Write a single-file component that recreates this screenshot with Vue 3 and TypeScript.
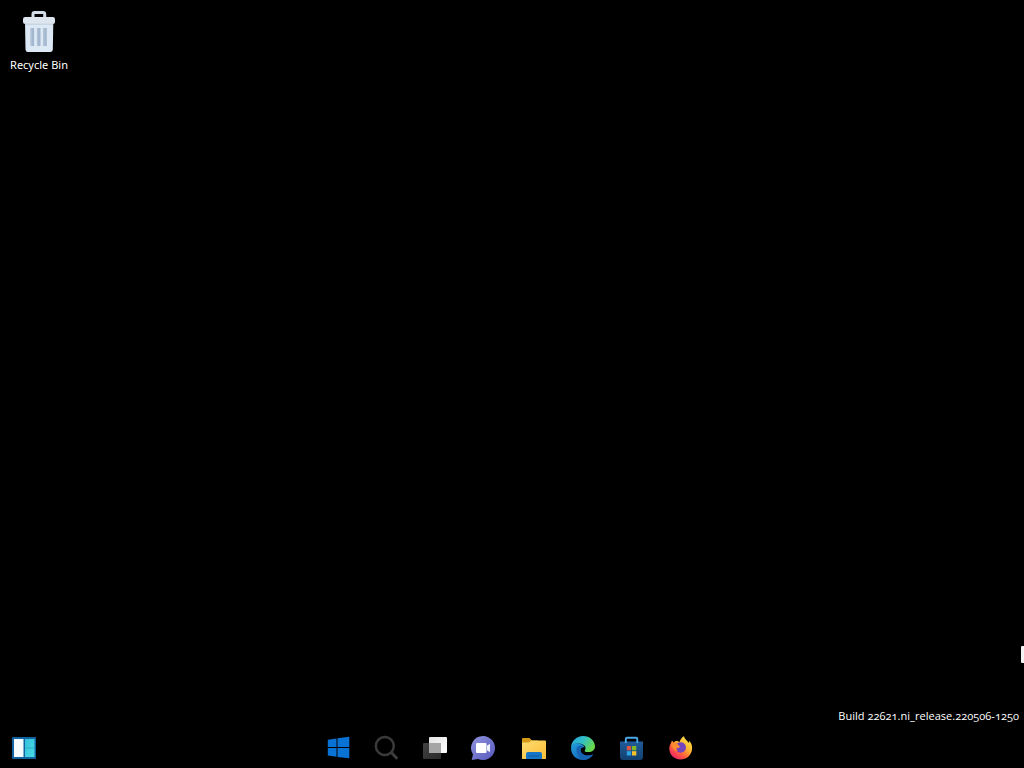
<script setup lang="ts">
import { ref } from 'vue'

const label = ref('Recycle Bin')
const build = ref('Build 22621.ni_release.220506-1250')
</script>

<template>
  <div class="screen">
    <main class="desktop">
      <div class="shortcut">
        <svg class="bin" width="40" height="46" viewBox="19 8 40 46">
          <path d="M33 17V14Q33 12.400 34.700 12.400H43Q44.700 12.400 44.700 14V17" fill="none" stroke="#d3dde7" stroke-width="3" />
          <path d="M25 22H53.300L52.800 49.500Q52.600 52 50.200 52H28Q25.600 52 25.500 49.500Z" fill="#dce8f4" />
          <rect x="23" y="17" width="32" height="7" rx="2.200" fill="#dde6ef" />
          <path d="M25 24.200H53" stroke="#bccbdc" stroke-width="0.900" />
          <path d="M32.300 28V46M38.700 28V46M45 28V46" stroke="#a3b7cf" stroke-width="3.600" />
          <path d="M31.300 28V46M37.700 28V46M44 28V46" stroke="#b4c5d9" stroke-width="1" />
        </svg>
        <span class="label">{{ label }}</span>
      </div>
      <div class="edge-handle"></div>
      <div class="build">{{ build }}</div>
    </main>

    <footer class="taskbar">
      <svg class="widgets" width="50" height="40" viewBox="0 0 50 40">
        <defs>
          <linearGradient id="wg" x1="0" y1="0" x2="1" y2="1">
            <stop offset="0" stop-color="#32bfdc" /><stop offset="1" stop-color="#4ddce5" />
          </linearGradient>
        </defs>
        <rect x="12" y="9" width="24" height="22" rx="1" fill="#11639f" />
        <rect x="14" y="11" width="9.500" height="18" fill="#f4fbff" />
        <rect x="25" y="11" width="9.500" height="18" fill="url(#wg)" />
        <path d="M25 20H34.500" stroke="#28a7c2" stroke-width="0.800" />
      </svg>

      <div class="apps">
        <svg class="app" viewBox="0 0 49 40">
          <path d="M13.800 11.700L22.500 10.400V19H13.800ZM23.500 10.200L35.300 8.700V19H23.500ZM13.800 20H22.500V28.700L13.800 27.500ZM23.500 20H35.300V30.300L23.500 28.900Z" fill="#0873d5" />
        </svg>
        <svg class="app" viewBox="0 0 49 40">
          <circle cx="21.800" cy="18" r="9" fill="none" stroke="#3a3a3a" stroke-width="2.500" />
          <path d="M28.300 24.500L34.300 30.700" stroke="#3d3d3d" stroke-width="3" />
        </svg>
        <svg class="app" viewBox="0 0 49 40">
          <defs>
            <linearGradient id="tv" x1="0" y1="0" x2="1" y2="1">
              <stop offset="0" stop-color="#e4e4e4" /><stop offset="1" stop-color="#ffffff" />
            </linearGradient>
            <linearGradient id="td" x1="0" y1="0" x2="1" y2="1">
              <stop offset="0" stop-color="#424242" /><stop offset="1" stop-color="#2a2a2a" />
            </linearGradient>
          </defs>
          <rect x="11" y="15" width="18" height="16" rx="1" fill="url(#td)" />
          <rect x="17" y="9" width="18" height="16" rx="1" fill="url(#tv)" />
          <rect x="17" y="15" width="12" height="10" fill="#a6a6a6" />
        </svg>
        <svg class="app" viewBox="0 0 49 40">
          <defs>
            <linearGradient id="ch" x1="0" y1="0" x2="1" y2="1">
              <stop offset="0" stop-color="#9294dc" /><stop offset="1" stop-color="#5558bd" />
            </linearGradient>
          </defs>
          <path d="M22 8A12 12 0 1 1 17 30.900L10.700 32L12 26.500A12 12 0 0 1 22 8Z" fill="url(#ch)" />
          <rect x="15" y="15" width="10.500" height="10" rx="1" fill="#fff" />
          <path d="M26 17.800L29 15.800V24.200L26 22.200Z" fill="#f1f2ff" />
        </svg>
        <svg class="app" viewBox="0 0 49 40">
          <defs>
            <linearGradient id="fo" x1="0" y1="0" x2="1" y2="1">
              <stop offset="0" stop-color="#ffdd73" /><stop offset="1" stop-color="#f9bd35" />
            </linearGradient>
          </defs>
          <path d="M12 11Q12 10 13 10H19.500L22 12.500H28V16H12Z" fill="#d59b18" />
          <path d="M12 14.500H19L21.500 12.500H35Q36 12.500 36 13.500V31H12Z" fill="url(#fo)" />
          <path d="M16 31V26Q16 24 18 24H30Q32 24 32 26V31Z" fill="#1676c5" />
          <path d="M19 28H29" stroke="#0e599b" stroke-width="1.200" stroke-linecap="round" />
        </svg>
        <svg class="app" viewBox="0 0 49 40">
          <defs>
            <linearGradient id="eg" x1="0" y1="0" x2="1" y2="0.500">
              <stop offset="0" stop-color="#249ddd" /><stop offset="0.500" stop-color="#31bfc9" /><stop offset="1" stop-color="#69d94b" />
            </linearGradient>
            <linearGradient id="eb" x1="0" y1="0" x2="0.700" y2="1">
              <stop offset="0" stop-color="#229ddd" /><stop offset="1" stop-color="#1265b8" />
            </linearGradient>
          </defs>
          <path d="M12 20C12 13 17.500 8 24 8C31 8 36 13 36 18.500C36 22 33 24 29.500 24C26.500 24 25.300 23.600 25.800 22.400C28 19 25 16 20 15.500C16 15 13 17 12 20Z" fill="url(#eg)" />
          <path d="M12 20C13 16 17 14.300 21 15.700C24 16.700 25.600 18.300 25.600 19.800C23.700 18.500 21.500 20 21.500 22.500C22 27 29 29 34.200 26.200C32 30 28.500 32 24 32C17 32 12 27 12 20Z" fill="url(#eb)" />
          <path d="M18.200 19C16 23 19 31 25.500 31.800C29 31.600 32.300 29.600 34.200 26.200C29 29 22 27 21.500 22.500C21.300 20.500 22.200 19 24 18.600C22.200 17.500 19.800 17.500 18.200 19Z" fill="#1762b2" />
        </svg>
        <svg class="app" viewBox="0 0 49 40">
          <defs>
            <linearGradient id="st" x1="0" y1="0" x2="0" y2="1">
              <stop offset="0" stop-color="#205c9a" /><stop offset="1" stop-color="#12406f" />
            </linearGradient>
          </defs>
          <path d="M12 13.500H35V29Q35 32 32 32H15Q12 32 12 29Z" fill="url(#st)" />
          <path d="M17.800 15V11Q17.800 9.700 19.100 9.700H28Q29.300 9.700 29.300 11V15" fill="none" stroke="#4ba8e7" stroke-width="1.900" />
          <rect x="18.800" y="18" width="4.300" height="4.300" fill="#dc5648" />
          <rect x="24" y="18" width="4.300" height="4.300" fill="#80b928" />
          <rect x="18.800" y="23.200" width="4.300" height="4.300" fill="#2ea3e1" />
          <rect x="24" y="23.200" width="4.300" height="4.300" fill="#f5c329" />
        </svg>
        <svg class="app" viewBox="0 0 49 40">
          <defs>
            <linearGradient id="ff" x1="0.850" y1="0.050" x2="0.200" y2="0.900">
              <stop offset="0" stop-color="#ffe345" /><stop offset="0.400" stop-color="#ffb62f" /><stop offset="0.700" stop-color="#ff623d" /><stop offset="1" stop-color="#ee2763" />
            </linearGradient>
          </defs>
          <path d="M13.500 16L15 12.500L16.500 14.500Q18 13 20 12.800L22.500 14C23.500 11.500 25 9 27 8.300C27.300 11 30.500 13 32 15L32.300 12.800C34.500 15.500 35.500 18 35 21.500C34.300 27.500 29.500 31.500 23.500 31.500C17 31.500 12 26.500 12.300 20Q12.300 18 13.500 16Z" fill="url(#ff)" />
          <path d="M20 15.500Q24 13 27.500 15.800Q30 19 28.300 22.300Q26 25.500 21.700 24.300Q18.700 23.200 18.500 20.500L22.500 19.500Z" fill="#7545bd" />
          <path d="M14 16.500Q17 14 20 16L23 18.500Q21.500 20 19.500 20Q19 22 21 23.200Q18 23.500 16.500 21Z" fill="#ff8a30" />
        </svg>
      </div>
    </footer>
  </div>
</template>

<style scoped>
.screen {
  width: 1024px;
  height: 768px;
  display: flex;
  flex-direction: column;
  background: #000;
  color: #fff;
  overflow: hidden;
  font-family: "Noto Sans", "Open Sans", sans-serif;
}
.desktop {
  flex: 1;
  display: flex;
  flex-direction: column;
}
.shortcut {
  width: 78px;
  height: 80px;
  padding-top: 8px;
  box-sizing: border-box;
  display: flex;
  flex-direction: column;
  align-items: center;
}
.bin {
  display: block;
}
.label {
  margin-top: 3px;
  font-size: 11px;
  line-height: 16px;
  white-space: nowrap;
}
.edge-handle {
  width: 3px;
  height: 17px;
  margin-top: 566px;
  align-self: flex-end;
  background: #f4f4f4;
  border-radius: 1px 0 0 1px;
}
.build {
  align-self: flex-end;
  margin-top: 45px;
  margin-right: 5px;
  font-size: 11px;
  line-height: 16px;
  letter-spacing: 0.03px;
  white-space: nowrap;
  font-family: "Open Sans", "Noto Sans", sans-serif;
  font-weight: 500;
  font-variant-numeric: oldstyle-nums;
}
.taskbar {
  height: 40px;
  display: flex;
}
.widgets {
  flex: none;
}
.apps {
  display: flex;
  margin-left: 264px;
}
.app {
  width: 49px;
  height: 40px;
  flex: none;
}
</style>

<style>
body {
  background: #000;
}
</style>
